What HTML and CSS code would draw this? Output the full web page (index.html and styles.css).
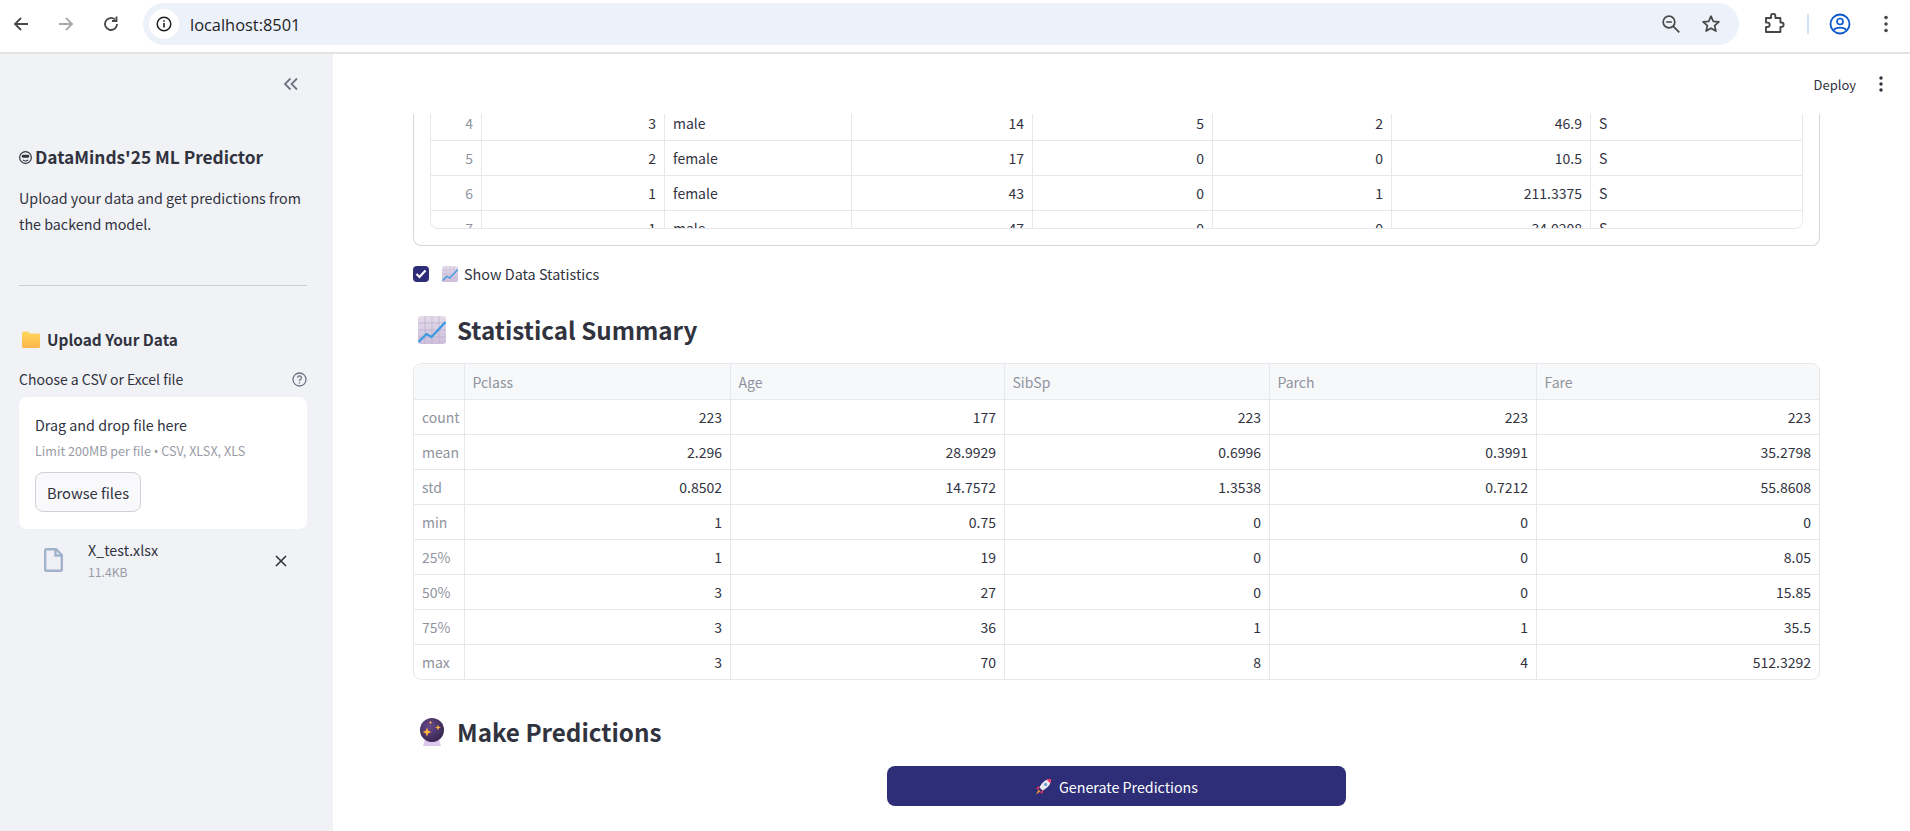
FILE: index.html
```html
<!DOCTYPE html>
<html lang="en">
<head>
  <meta charset="UTF-8" />
  <title>DataMinds'25 ML Predictor</title>
  <link rel="stylesheet" href="styles.css">
</head>
<body>
  <svg class="sprites" width="0" height="0">
    <defs>
      <linearGradient id="chart-bg" x1="0" y1="0" x2="0" y2="1">
        <stop offset="0" stop-color="#e4dcea" />
        <stop offset="1" stop-color="#cdbfdc" />
      </linearGradient>
      <linearGradient id="folder-bg" x1="0" y1="0" x2="0" y2="1">
        <stop offset="0" stop-color="#ffd75e" />
        <stop offset="1" stop-color="#ffb54c" />
      </linearGradient>
      <radialGradient id="ball-bg" cx="0.4" cy="0.35" r="0.7">
        <stop offset="0" stop-color="#6a4a8c" />
        <stop offset="1" stop-color="#33244d" />
      </radialGradient>
      <symbol id="chart" viewBox="0 0 28 28">
        <rect x="0" y="0" width="28" height="28" rx="3" fill="url(#chart-bg)" />
        <path d="M7 0v28M14 0v28M21 0v28M0 7h28M0 14h28M0 21h28" stroke="#bcaccf" stroke-width=".7" />
        <path d="M0.500 26L8.500 18l5 3L27.500 6" fill="none" stroke="#3f9be0" stroke-width="2.4" stroke-linejoin="round" />
      </symbol>
      <symbol id="ball" viewBox="0 0 24 28">
        <path d="M5 21h14l2 7H3z" fill="#dcc8ee" />
        <circle cx="12" cy="12" r="12" fill="url(#ball-bg)" />
        <path d="M7 9.500l1.300 3.200 3.200 1.300-3.200 1.300L7 18.500l-1.300-3.200L2.500 14l3.200-1.300z" fill="#ffb13d" />
        <path d="M18 6.500l.8 2.200 2.200.8-2.200.8-.8 2.200-.8-2.200-2.200-.8 2.200-.8z" fill="#ffb13d" />
        <path d="M10.500 2.500l.5 1.500 1.500.5-1.500.5-.5 1.500-.5-1.500-1.500-.5 1.500-.5z" fill="#ffb13d" />
      </symbol>
    </defs>
  </svg>

  <header class="browser-bar">
    <div class="nav-btns">
      <svg class="nav-icon" viewBox="0 0 18 18"><path d="M16 9H3M9 3L3 9l6 6" fill="none" stroke="#474747" stroke-width="1.8" /></svg>
      <svg class="nav-icon" viewBox="0 0 18 18"><path d="M2 9h13M9 3l6 6-6 6" fill="none" stroke="#a8a8a8" stroke-width="1.8" /></svg>
      <svg class="nav-icon" viewBox="0 0 18 18"><path d="M15 9a6 6 0 1 1-2-4.500M14.500 1.500V6H10" fill="none" stroke="#474747" stroke-width="1.8" /></svg>
    </div>
    <div class="omnibox">
      <span class="site-info">
        <svg width="16" height="16" viewBox="0 0 16 16"><circle cx="8" cy="8" r="6.8" fill="none" stroke="#1f1f1f" stroke-width="1.5" /><path d="M8 7v4.500M8 4.200v1.600" stroke="#1f1f1f" stroke-width="1.6" /></svg>
      </span>
      <span class="url">localhost:8501</span>
      <span class="omni-right">
        <svg width="20" height="20" viewBox="0 0 20 20"><circle cx="8" cy="8" r="5.8" fill="none" stroke="#474747" stroke-width="1.7" /><path d="M5.200 8h5.600M12.300 12.300l6 6" stroke="#474747" stroke-width="1.7" /></svg>
        <svg width="20" height="20" viewBox="0 0 20 20"><path d="M10 2.200l2.300 5.200 5.600.5-4.300 3.700 1.300 5.500-4.900-2.900-4.900 2.900 1.300-5.500-4.300-3.700 5.600-.5z" fill="none" stroke="#474747" stroke-width="1.7" stroke-linejoin="round" /></svg>
      </span>
    </div>
    <div class="chrome-right">
      <svg width="22" height="22" viewBox="0 0 22 22"><path d="M3 6h5V4a2.200 2.200 0 0 1 4.400 0v2h5v4.500h1a2.200 2.200 0 0 1 0 4.400h-1V20H3v-5h1.500a2.200 2.200 0 0 0 0-4.400H3z" transform="translate(0 -1)" fill="none" stroke="#474747" stroke-width="1.9" stroke-linejoin="round" /></svg>
      <span class="chrome-sep"></span>
      <svg width="22" height="24" viewBox="0 0 22 24"><circle cx="11" cy="12" r="9.500" fill="none" stroke="#0b57d0" stroke-width="1.8" /><circle cx="11" cy="9.500" r="3" fill="none" stroke="#0b57d0" stroke-width="1.7" /><path d="M4.800 18c2-3.200 10.400-3.200 12.400 0" fill="none" stroke="#0b57d0" stroke-width="1.7" /></svg>
      <svg class="chrome-menu" width="4" height="18" viewBox="0 0 4 18"><circle cx="2" cy="2.500" r="1.8" fill="#474747" /><circle cx="2" cy="9" r="1.8" fill="#474747" /><circle cx="2" cy="15.500" r="1.8" fill="#474747" /></svg>
    </div>
  </header>

  <div class="app">
    <aside class="sidebar">
      <div class="collapse-row">
        <svg width="16" height="14" viewBox="0 0 16 14"><path d="M7.500 1.500L2 7l5.500 5.500M14 1.500L8.500 7l5.500 5.500" fill="none" stroke="#6f7482" stroke-width="1.8" /></svg>
      </div>
      <h3 class="side-title">
        <svg class="nerd" width="13" height="13" viewBox="0 0 12 12"><circle cx="6" cy="6" r="5.400" fill="none" stroke="#33343f" stroke-width="1.1" /><rect x="2.600" y="3.400" width="6.800" height="2.800" rx="1.200" fill="#33343f" /><path d="M3.500 8.200c1.500 1.300 3.500 1.300 5 0" fill="none" stroke="#33343f" stroke-width="1" /></svg>
        DataMinds'25 ML Predictor
      </h3>
      <p class="side-desc">Upload your data and get predictions from the backend model.</p>
      <hr class="side-rule" />
      <h4 class="upload-title">
        <svg width="18" height="17" viewBox="0 0 18 17"><path d="M0 2a1.500 1.500 0 0 1 1.500-1.500h4.500L8 2.500h8.500A1.500 1.500 0 0 1 18 4v11.500a1.500 1.500 0 0 1-1.500 1.500h-15A1.500 1.500 0 0 1 0 15.500z" fill="url(#folder-bg)" /></svg>
        Upload Your Data
      </h4>
      <div class="file-label">
        <span>Choose a CSV or Excel file</span>
        <svg width="15" height="15" viewBox="0 0 15 15"><circle cx="7.500" cy="7.500" r="6.500" fill="none" stroke="#6f7482" stroke-width="1.3" /><path d="M5.600 5.800a1.900 1.900 0 1 1 2.900 1.600c-.7.400-1 .8-1 1.600M7.500 10.300v1.300" fill="none" stroke="#6f7482" stroke-width="1.3" /></svg>
      </div>
      <div class="dropzone">
        <div class="drop-title">Drag and drop file here</div>
        <div class="drop-limit">Limit 200MB per file <span class="dot">•</span> CSV, XLSX, XLS</div>
        <button class="browse-btn">Browse files</button>
      </div>
      <div class="file-item">
        <svg class="file-icon" width="19" height="24" viewBox="0 0 19 24"><path d="M1.200 2.500A1.300 1.300 0 0 1 2.500 1.200H12L17.800 7v14.500a1.300 1.300 0 0 1-1.300 1.300h-14a1.300 1.300 0 0 1-1.300-1.300z" fill="#eef0f6" stroke="#a3b2cc" stroke-width="2.4" /><path d="M11.500 1v6.500H18" fill="none" stroke="#a3b2cc" stroke-width="2.4" /></svg>
        <div class="file-meta">
          <div class="file-name">X_test.xlsx</div>
          <div class="file-size">11.4KB</div>
        </div>
        <svg class="file-remove" width="12" height="12" viewBox="0 0 12 12"><path d="M1 1l10 10M11 1L1 11" stroke="#31333f" stroke-width="1.6" /></svg>
      </div>
    </aside>

    <main class="main">
      <div class="top-bar">
        <span class="deploy">Deploy</span>
        <svg width="4" height="16" viewBox="0 0 4 16"><circle cx="2" cy="2" r="1.7" fill="#31333f" /><circle cx="2" cy="8" r="1.7" fill="#31333f" /><circle cx="2" cy="14" r="1.7" fill="#31333f" /></svg>
      </div>

      <div class="preview-frame">
        <div class="preview-clip">
          <table class="grid preview-grid">
            <colgroup>
              <col class="p0" /><col class="p1" /><col class="p2" /><col class="p3" /><col class="p4" /><col class="p5" /><col class="p6" /><col />
            </colgroup>
            <tbody>
              <tr><th>4</th><td>3</td><td class="txt">male</td><td>14</td><td>5</td><td>2</td><td>46.9</td><td class="txt">S</td></tr>
              <tr><th>5</th><td>2</td><td class="txt">female</td><td>17</td><td>0</td><td>0</td><td>10.5</td><td class="txt">S</td></tr>
              <tr><th>6</th><td>1</td><td class="txt">female</td><td>43</td><td>0</td><td>1</td><td>211.3375</td><td class="txt">S</td></tr>
              <tr><th>7</th><td>1</td><td class="txt">male</td><td>47</td><td>0</td><td>0</td><td>34.0208</td><td class="txt">S</td></tr>
            </tbody>
          </table>
        </div>
      </div>

      <label class="stats-check">
        <span class="check-box">
          <svg width="12" height="10" viewBox="0 0 12 10"><path d="M1.500 5l3 3 6-6.500" fill="none" stroke="#fff" stroke-width="2.2" /></svg>
        </span>
        <svg class="check-emoji" width="16" height="16"><use href="#chart" /></svg>
        <span class="check-text">Show Data Statistics</span>
      </label>

      <h2 class="section-title">
        <svg width="28" height="28"><use href="#chart" /></svg>
        Statistical Summary
      </h2>

      <div class="stats-wrap">
        <table class="grid stats-grid">
          <colgroup>
            <col class="s0" /><col class="s1" /><col class="s2" /><col class="s3" /><col class="s4" /><col />
          </colgroup>
          <thead>
            <tr><th></th><th>Pclass</th><th>Age</th><th>SibSp</th><th>Parch</th><th>Fare</th></tr>
          </thead>
          <tbody>
            <tr><th>count</th><td>223</td><td>177</td><td>223</td><td>223</td><td>223</td></tr>
            <tr><th>mean</th><td>2.296</td><td>28.9929</td><td>0.6996</td><td>0.3991</td><td>35.2798</td></tr>
            <tr><th>std</th><td>0.8502</td><td>14.7572</td><td>1.3538</td><td>0.7212</td><td>55.8608</td></tr>
            <tr><th>min</th><td>1</td><td>0.75</td><td>0</td><td>0</td><td>0</td></tr>
            <tr><th>25%</th><td>1</td><td>19</td><td>0</td><td>0</td><td>8.05</td></tr>
            <tr><th>50%</th><td>3</td><td>27</td><td>0</td><td>0</td><td>15.85</td></tr>
            <tr><th>75%</th><td>3</td><td>36</td><td>1</td><td>1</td><td>35.5</td></tr>
            <tr><th>max</th><td>3</td><td>70</td><td>8</td><td>4</td><td>512.3292</td></tr>
          </tbody>
        </table>
      </div>

      <h2 class="section-title predict-title">
        <svg class="ball-icon" width="24" height="28"><use href="#ball" /></svg>
        Make Predictions
      </h2>

      <div class="predict-row">
        <button class="predict-btn">
          <svg width="17" height="17" viewBox="0 0 17 17">
            <path d="M5 8L1 10l2 2z" fill="#e8325f" />
            <path d="M9 12l-2 4-2-2z" fill="#e8325f" />
            <path d="M4.500 9.500C7 4 11 1 16 1c0 5-3 9-8.500 11.500z" fill="#ece8f2" />
            <path d="M11.500 1.600C13 1.100 14.500 1 16 1c0 1.500-.1 3-.6 4.500z" fill="#ee3a68" />
            <circle cx="10.600" cy="6.400" r="1.600" fill="#6f9ad8" />
            <path d="M3.500 11.500l2 2L1 16.500z" fill="#f08a3c" />
          </svg>
          Generate Predictions
        </button>
      </div>
    </main>
  </div>
</body>
</html>
```

FILE: styles.css
```css
* {
  box-sizing: border-box;
}

html, body {
  margin: 0;
  height: 100%;
}

body {
  font-family: "Noto Sans CJK SC", "Noto Sans", sans-serif;
  color: #31333f;
  background: #fff;
  overflow: hidden;
  display: flex;
  flex-direction: column;
}

.sprites {
  display: block;
  height: 0;
}

/* browser chrome */
.browser-bar {
  height: 54px;
  flex: none;
  display: flex;
  align-items: flex-start;
  background: #fff;
  border-bottom: 2px solid #e3e3e3;
  padding-top: 3px;
}

.nav-btns {
  width: 143px;
  flex: none;
  display: flex;
  gap: 27px;
  padding: 12px 0 0 12px;
}

.nav-icon {
  width: 18px;
  height: 18px;
}

.omnibox {
  width: 1596px;
  height: 42px;
  flex: none;
  display: flex;
  align-items: center;
  background: #ecf1fa;
  border-radius: 21px;
  padding: 0 0 0 6px;
}

.site-info {
  width: 30px;
  height: 30px;
  border-radius: 50%;
  background: #fff;
  display: flex;
  align-items: center;
  justify-content: center;
}

.url {
  margin-left: 11px;
  font-family: "Open Sans", sans-serif;
  font-size: 16.4px;
  color: #1f1f1f;
}

.omni-right {
  margin-left: auto;
  display: flex;
  gap: 20px;
  padding-right: 18px;
}

.chrome-right {
  flex: 1;
  display: flex;
  align-items: center;
  height: 42px;
  padding-left: 24px;
}

.chrome-sep {
  width: 2px;
  height: 20px;
  background: #d3e0f7;
  margin: 0 20px 0 22px;
}

.chrome-menu {
  margin-left: 33px;
}

/* app */
.app {
  flex: 1;
  min-height: 0;
  display: flex;
}

.sidebar {
  width: 333px;
  flex: none;
  background: #f0f2f6;
  padding: 0 26px 0 19px;
}

.collapse-row {
  height: 60px;
  display: flex;
  align-items: center;
  justify-content: flex-end;
  padding: 0 8px 0 0;
}

.side-title {
  margin: 29px 0 0;
  font-size: 17.3px;
  line-height: 28px;
  font-weight: 600;
  display: flex;
  align-items: center;
  gap: 3px;
}

.side-desc {
  margin: 14px 0 0;
  font-size: 14.3px;
  line-height: 26px;
}

.side-rule {
  margin: 48px 0 0;
  border: none;
  border-top: 1px solid #c9ccd3;
}

.upload-title {
  margin: 40px 0 0 3px;
  font-size: 15.4px;
  line-height: 26px;
  font-weight: 600;
  display: flex;
  align-items: center;
  gap: 7px;
}

.file-label {
  margin-top: 17px;
  display: flex;
  align-items: center;
  justify-content: space-between;
  font-size: 14px;
  line-height: 20px;
}

.dropzone {
  margin-top: 8px;
  height: 132px;
  background: #fff;
  border-radius: 8px;
  padding: 15px 16px 0;
}

.drop-title {
  font-size: 14.3px;
  line-height: 26px;
}

.drop-limit {
  font-size: 12.6px;
  line-height: 20px;
  margin-top: 3px;
  color: #999ca6;
}

.dot {
  font-family: "Noto Sans", sans-serif;
}

.browse-btn {
  margin-top: 10px;
  width: 106px;
  height: 40px;
  font: inherit;
  font-size: 14.7px;
  color: #31333f;
  background: #f9f9fb;
  border: 1px solid #d0d2d8;
  border-radius: 8px;
  padding: 0;
}

.file-item {
  display: flex;
  align-items: flex-start;
  padding: 10px 0 0 25px;
}

.file-icon {
  margin-top: 9px;
}

.file-meta {
  margin-left: 25px;
  flex: 1;
}

.file-name {
  font-size: 14.3px;
  line-height: 22px;
}

.file-size {
  font-size: 12.2px;
  line-height: 22px;
  color: #999ca6;
}

.file-remove {
  margin: 16px 20px 0 0;
}

/* main column */
.main {
  flex: 1;
  min-width: 0;
  padding: 0 90px 0 80px;
}

.top-bar {
  height: 60px;
  display: flex;
  align-items: center;
  justify-content: flex-end;
  gap: 23px;
  margin-right: -63px;
}

.deploy {
  font-size: 13px;
}

.preview-frame {
  height: 132px;
  border: 1px solid #d5d7dc;
  border-top: none;
  border-radius: 0 0 8px 8px;
  padding: 0 16px;
}

.preview-clip {
  height: 115px;
  overflow: hidden;
  border: 1px solid #e6e8ec;
  border-top: none;
  border-radius: 0 0 8px 8px;
}

.grid {
  width: 100%;
  table-layout: fixed;
  border-collapse: separate;
  border-spacing: 0;
  font-size: 14px;
}

.grid td, .grid th {
  height: 35px;
  border-right: 1px solid #e6e8ec;
  border-bottom: 1px solid #e6e8ec;
  padding: 0 8px;
  font-weight: 400;
  white-space: nowrap;
  overflow: hidden;
}

.grid td {
  text-align: right;
}

.grid tr > :last-child {
  border-right: none;
}

.grid tbody th {
  color: #8f939e;
}

.grid .txt {
  text-align: left;
}

.preview-grid {
  margin-top: -8px;
}

.preview-grid th {
  text-align: right;
}

.p0 { width: 51px; }
.p1 { width: 183px; }
.p2 { width: 187px; }
.p3 { width: 181px; }
.p4 { width: 180px; }
.p5 { width: 179px; }
.p6 { width: 199px; }

.stats-grid tbody th {
  text-align: left;
}

.stats-grid thead th {
  height: 36px;
  background: #f7f8fa;
  color: #8f939e;
  text-align: left;
  padding-left: 7.5px;
}

.s0 { width: 51px; }
.s1 { width: 266px; }
.s2 { width: 274px; }
.s3 { width: 265px; }
.s4 { width: 267px; }

.stats-check {
  margin-top: 20px;
  display: flex;
  align-items: center;
  height: 16px;
  font-size: 14.4px;
}

.check-box {
  width: 16px;
  height: 16px;
  flex: none;
  border-radius: 4px;
  background: #2e2e78;
  display: flex;
  align-items: center;
  justify-content: center;
}

.check-emoji {
  margin: 0 6px 0 13px;
}

.check-text {
  margin-top: -2px;
}

.section-title {
  margin: 34px 0 0;
  height: 28px;
  padding-left: 5px;
  display: flex;
  align-items: center;
  gap: 11px;
  font-size: 24.2px;
  line-height: 28px;
  font-weight: 600;
}

.stats-wrap {
  margin-top: 19px;
  border: 1px solid #e6e8ec;
  border-radius: 8px;
  overflow: hidden;
}

.stats-wrap tbody tr:last-child > * {
  height: 34px;
  border-bottom: none;
}

.predict-title {
  margin-top: 38px;
  padding-left: 7px;
  gap: 13px;
}

.predict-row {
  margin-top: 20px;
  display: flex;
  justify-content: center;
}

.predict-btn {
  width: 459px;
  height: 40px;
  display: flex;
  align-items: center;
  justify-content: center;
  gap: 7px;
  font: inherit;
  font-size: 14.25px;
  color: #fff;
  background: #2e2e78;
  border: none;
  border-radius: 8px;
}
```
